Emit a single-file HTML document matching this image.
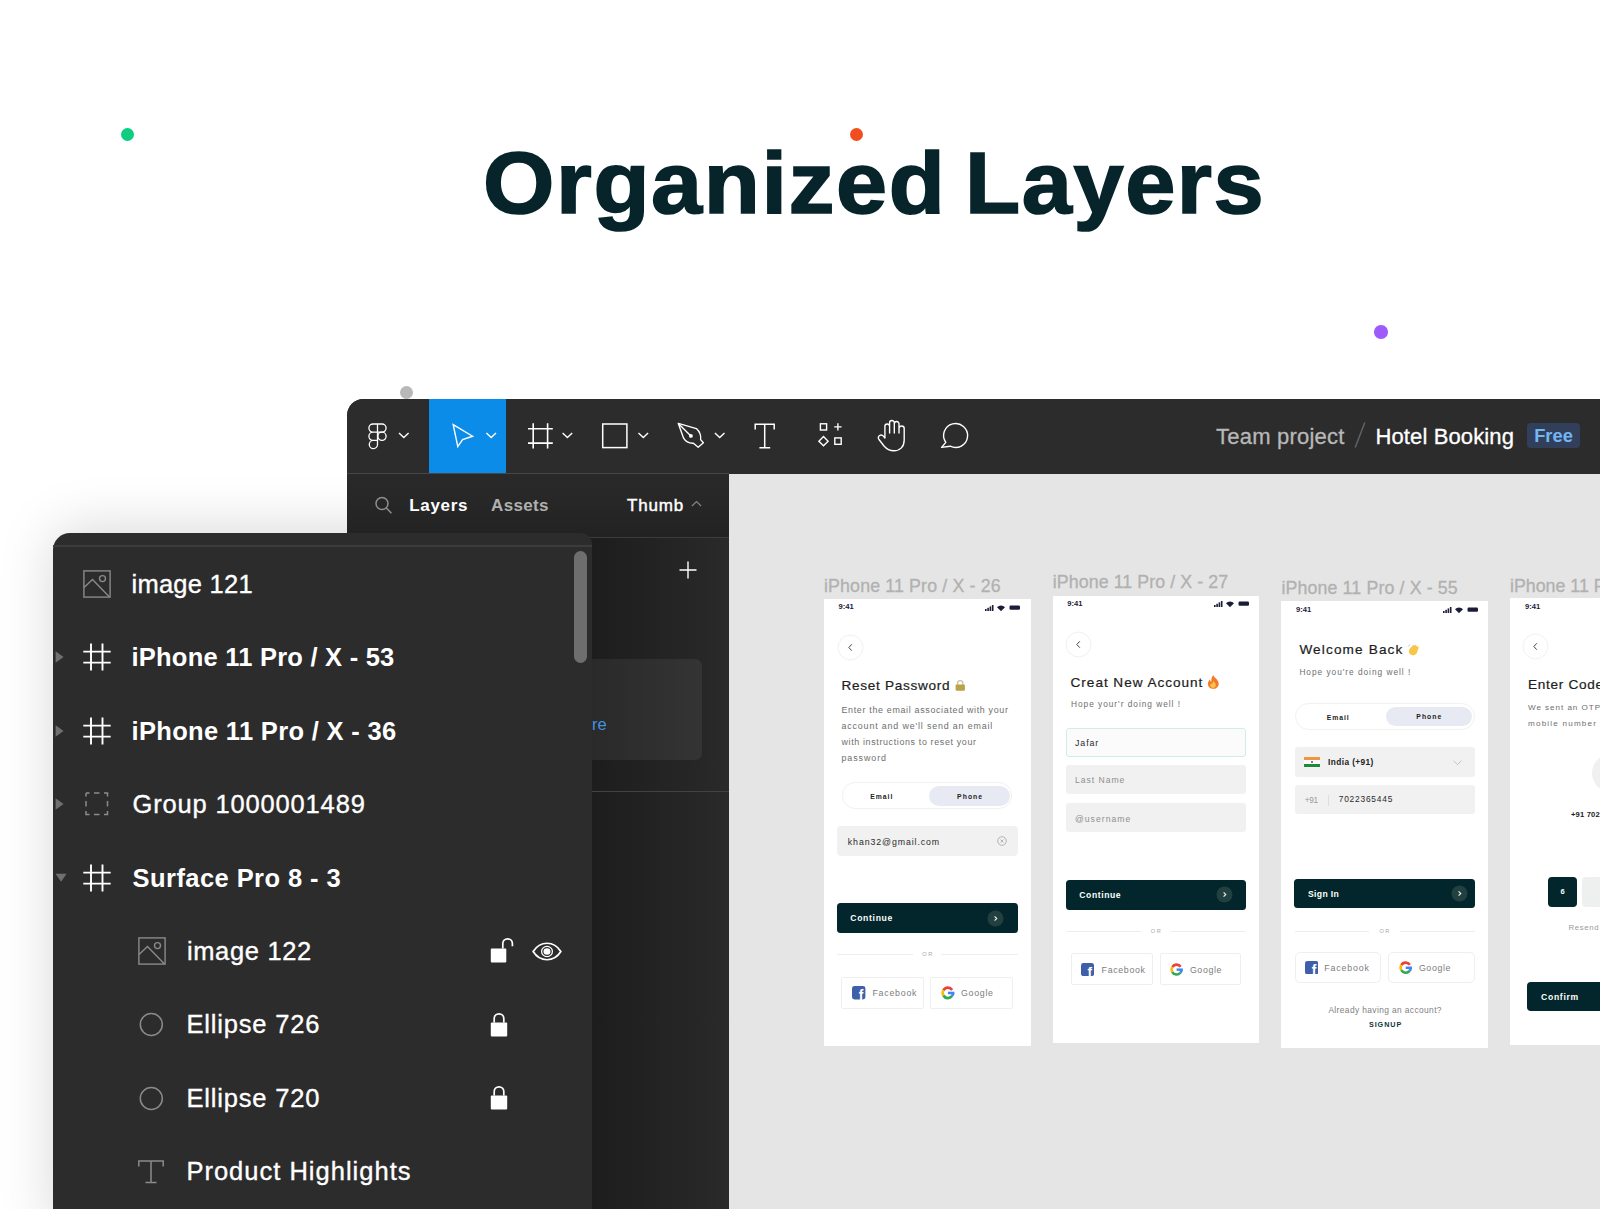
<!DOCTYPE html>
<html lang="en">
<head>
<meta charset="utf-8">
<title>Organized Layers</title>
<style>
*{box-sizing:border-box;margin:0;padding:0}
html,body{width:1600px;height:1209px;overflow:hidden;background:#fff}
body{position:relative;font-family:"Liberation Sans",sans-serif;color:#fff}
.abs{position:absolute}
.dot{position:absolute;border-radius:50%}
h1{position:absolute;left:481px;top:129px;width:790px;height:108px;font-size:87px;line-height:108px;font-weight:700;color:#06242a;white-space:nowrap;-webkit-text-stroke:1.6px #06242a}
/* figma window */
#win{position:absolute;left:347px;top:399px;width:1253px;height:810px;background:#2c2c2c;border-top-left-radius:16.500px;overflow:hidden}
#toolbar{position:absolute;left:0;top:0;width:1253px;height:74px;background:#2c2c2c}
#sel{position:absolute;left:82px;top:0;width:76.500px;height:74.700px;background:#0c8ce9}
#tbline{position:absolute;left:0;top:73.600px;width:382px;height:1.200px;background:#464646}
#side{position:absolute;left:0;top:75px;width:382px;height:735px;background:linear-gradient(90deg,#1d1d1d 0,#1d1d1d 245px,#282828 365px,#2a2a2a 382px)}
#canvas{position:absolute;left:382px;top:74.700px;width:871px;height:736px;background:#e5e5e5}
.tab{position:absolute;font-size:17px;font-weight:700;line-height:20px;white-space:nowrap;letter-spacing:.2px;margin-top:1.200px}
/* floating panel */
#panel{position:absolute;left:53px;top:533px;width:539px;height:676px;background:#2c2c2c;border-top-left-radius:17px;border-top-right-radius:11px;}
.row{position:absolute;left:0;width:539px;height:40px;font-size:25.5px;line-height:40px;white-space:nowrap}
.row span{position:absolute;top:0}
.b{font-weight:700}
.row span:not(.b){-webkit-text-stroke:.35px #fff}
/* phones */
.ph{position:absolute;width:207px;height:448px;background:#fff;color:#222;overflow:hidden}
.lbl{position:absolute;font-size:18px;line-height:20px;color:#b2b2b2;white-space:nowrap}
#phones{position:absolute;left:0;top:0;width:1600px;height:1209px;overflow:hidden}
.t{white-space:nowrap}
</style>
</head>
<body>
<div class="dot" style="left:120.700px;top:127.800px;width:13.600px;height:13.600px;background:#0ccd82"></div>
<div class="dot" style="left:849.700px;top:127.800px;width:13.600px;height:13.600px;background:#f04e1e"></div>
<div class="dot" style="left:1374.100px;top:325.100px;width:13.600px;height:13.600px;background:#9f5afd"></div>
<div class="dot" style="left:400px;top:385.700px;width:13px;height:13px;background:#b8b8b8"></div>
<h1><span class="abs" style="left:2px;top:0;letter-spacing:1.500px;transform-origin:0 0;transform:scaleX(1.056)">Organized</span><span class="abs" style="left:484px;top:0;letter-spacing:1.500px;transform-origin:0 0;transform:scaleX(1.037)">Layers</span></h1>

<div class="abs" style="left:53px;top:533px;width:539px;height:700px;border-top-left-radius:17px;border-top-right-radius:11px;box-shadow:2px -2px 55px rgba(0,0,0,.17)"></div>
<div id="win">
  <div id="toolbar">
    <div id="sel"></div>
    <svg class="abs" style="left:0;top:0" width="1253" height="74" viewBox="347 399 1253 74" fill="none" stroke="#fff" stroke-width="1.4">
      <!-- figma logo -->
      <g stroke-width="1.3">
      <path d="M377.5 424H373a4.1 4.1 0 0 0 0 8.2h4.5zM377.5 424h4.5a4.1 4.1 0 0 1 0 8.2h-4.5zM377.5 432.2H373a4.1 4.1 0 0 0 0 8.2h4.5zM377.5 440.4H373a4.1 4.1 0 1 0 4.5 4.1z"/>
      <circle cx="382" cy="436.3" r="4.1"/>
      </g>
      <path d="M399 433l4.8 4.6 4.8-4.6"/>
      <!-- move -->
      <path d="M453.2 424.6L472.6 436.2 462.6 439.6 457.8 446.6z" stroke-linejoin="miter"/>
      <path d="M486.4 433l4.8 4.6 4.8-4.6"/>
      <!-- frame -->
      <path d="M533.2 423.3v25.2M547.6 423.3v25.2M528 428.8h24.8M528 443.1h24.8" stroke-width="1.6"/>
      <path d="M562.6 433l4.8 4.6 4.8-4.6"/>
      <!-- rect -->
      <rect x="602.7" y="424" width="24.2" height="23.6" stroke-width="1.5"/>
      <path d="M638.5 433l4.8 4.6 4.8-4.6"/>
      <!-- pen -->
      <path d="M678.3 423.4L696.4 428.6C700 432 701.2 435.6 700.6 439.6L703.4 442.8 698.2 447.2 693.4 443.2C689 443.4 685.6 441.6 683.6 438.2z" stroke-linejoin="round"/>
      <path d="M678.3 423.4L690.4 435.4" />
      <circle cx="690.9" cy="435.9" r="1.9" fill="#fff" stroke="none"/>
      <path d="M714.9 433l4.8 4.6 4.8-4.6"/>
      <!-- text -->
      <path d="M755.2 429.4v-5.2h19v5.2M764.7 424.2v23.6M759.4 447.8h10.8" stroke-width="1.5"/>
      <!-- components -->
      <rect x="820.4" y="423.8" width="6.2" height="6.2"/>
      <path d="M837.9 423.2v7.4M834.2 426.9h7.4"/>
      <path d="M823.5 436.6l4.6 4.6-4.6 4.6-4.6-4.6z"/>
      <rect x="834.8" y="437.9" width="6.4" height="6.4"/>
      <!-- hand -->
      <path d="M884.9 438V426.4a2.35 2.35 0 0 1 4.7 0V433M889.6 433V422.8a2.35 2.35 0 0 1 4.7 0V433M894.3 433V423.8a2.35 2.35 0 0 1 4.7 0V433M899 433V428.6a2.6 2.6 0 0 1 5.2 0V440c0 6.6-4 10.8-10.4 10.8-4.6 0-7.2-1.8-9.8-4.8L879.2 439.800c-1.400-1.600-1-3.400.4-4.300 1.500-.9 3-.2 4 .9L884.900 438" stroke-linejoin="round" stroke-linecap="round"/>
      <!-- comment -->
      <path d="M941.6 447.400L945.800 442.400A12 12 0 1 1 950.200 446.200z" stroke-linejoin="round"/>
    </svg>
    <div class="abs" style="left:869px;top:25px;font-size:22px;line-height:26px;color:#b8b8b8;white-space:nowrap;letter-spacing:.22px;-webkit-text-stroke:.3px #b8b8b8">Team project</div>
    <svg class="abs" style="left:1006px;top:22px" width="14" height="28" viewBox="0 0 14 28"><path d="M11.800 1.500L2.200 26.500" stroke="#626262" stroke-width="1.500" fill="none"/></svg>
    <div class="abs" style="left:1028.500px;top:25px;font-size:22px;line-height:26px;color:#fff;white-space:nowrap;letter-spacing:.12px;-webkit-text-stroke:.3px #fff">Hotel Booking</div>
    <div class="abs" style="left:1180px;top:24px;width:53px;height:25px;border-radius:4px;background:#323f5b;color:#74b6f3;font-size:18.300px;line-height:26px;font-weight:700;text-align:center">Free</div>
  </div>
  <div id="side">
    <div class="abs" style="left:0;top:0;width:382px;height:63px;background:linear-gradient(180deg,#292929 0,#272727 45%,#222 100%)"></div>
    <div class="abs" style="left:0;top:63px;width:382px;height:1px;background:#3c3c3c"></div>
    <svg class="abs" style="left:26px;top:21px" width="22" height="22" viewBox="0 0 22 22" fill="none" stroke="#8f8f8f" stroke-width="1.5"><circle cx="9" cy="8.500" r="6"/><path d="M13.400 13l5 5.200"/></svg>
    <div class="tab" style="left:62.300px;top:21px;color:#fff;letter-spacing:.65px">Layers</div>
    <div class="tab" style="left:144px;top:21px;color:#b0b0b0;letter-spacing:.35px">Assets</div>
    <div class="tab" style="left:280px;top:21px;color:#fff;font-weight:400;-webkit-text-stroke:.45px #fff;letter-spacing:.85px">Thumb</div>
    <svg class="abs" style="left:343.500px;top:25.500px" width="11" height="7.500" viewBox="0 0 12 8" fill="none" stroke="#858585" stroke-width="1.3"><path d="M1 6.500l5-4.800 5 4.800"/></svg>
    <svg class="abs" style="left:332px;top:87px" width="18" height="18" viewBox="0 0 18 18" fill="none" stroke="#fff" stroke-width="1.4"><path d="M9 .5v17M.5 9h17"/></svg>
    <div class="abs" style="left:245px;top:185px;width:110px;height:101px;background:linear-gradient(90deg,#2a2a2a,#343434);border-radius:0 7px 7px 0"></div>
    <div class="abs" style="left:245px;top:239px;font-size:16.500px;line-height:22px;color:#4292df">re</div>
    <div class="abs" style="left:245px;top:316.500px;width:137px;height:1.200px;background:#424242"></div>
  </div>
  <div id="tbline"></div>
  <div id="canvas"></div>
</div>

<!--PHONES-->
<div id="phones">
<span class="abs t" style="left:824.0px;top:574.3px;font-size:17.8px;line-height:24.9px;color:#b1b1b1;font-weight:400;letter-spacing:0.14px;-webkit-text-stroke:.3px #b1b1b1;">iPhone 11 Pro / X - 26</span>
<div class="abs" style="left:824.0px;top:598.7px;width:206.8px;height:447.8px;background:#fff;"></div>
<span class="abs t" style="left:838.5px;top:602.4px;font-size:7.6px;line-height:10.6px;color:#1b1b3a;font-weight:700;letter-spacing:0.03px;">9:41</span>
<svg class="abs" style="left:985.3px;top:603.7px" width="36" height="7" viewBox="0 0 36 7" fill="#1b1b3a"><rect x="0" y="5" width="1.6" height="2"/><rect x="2.300" y="3.800" width="1.600" height="3.200"/><rect x="4.600" y="2.400" width="1.600" height="4.600"/><rect x="6.900" y="1" width="1.600" height="6"/><path d="M12 3.200a5.500 5.500 0 0 1 8 0l-4 4z"/><rect x="24.500" y="1.600" width="10.500" height="4.200" rx="1.200"/></svg>
<svg class="abs" style="left:836.8px;top:633.8px" width="27" height="27" viewBox="0 0 27 27" fill="none"><circle cx="13.500" cy="13.500" r="12.400" fill="#fff" stroke="#f1f1f1" stroke-width="1"/><path d="M14.800 10.300l-3 3.200 3 3.200" stroke="#444" stroke-width="1"/></svg>
<span class="abs t" style="left:841.5px;top:675.7px;font-size:13.6px;line-height:19.0px;color:#1e1e1e;font-weight:400;letter-spacing:0.69px;-webkit-text-stroke:.22px #1e1e1e;">Reset Password</span>
<svg class="abs" style="left:954.5px;top:680px" width="10.500" height="11" viewBox="0 0 10.500 11"><path d="M2.600 5V3.300a2.650 2.650 0 0 1 5.300 0V5" fill="none" stroke="#c9c39a" stroke-width="1.300"/><rect x=".6" y="4.600" width="9.300" height="6.200" rx="1" fill="#b9a24a"/></svg>
<span class="abs t" style="left:841.5px;top:703.8px;font-size:8.9px;line-height:12.5px;color:#6e6e6e;font-weight:400;letter-spacing:0.68px;">Enter the email associated with your</span>
<span class="abs t" style="left:841.5px;top:719.7px;font-size:8.9px;line-height:12.5px;color:#6e6e6e;font-weight:400;letter-spacing:0.84px;">account and we&#x27;ll send an email</span>
<span class="abs t" style="left:841.5px;top:735.8px;font-size:8.9px;line-height:12.5px;color:#6e6e6e;font-weight:400;letter-spacing:0.65px;">with instructions to reset your</span>
<span class="abs t" style="left:841.5px;top:751.8px;font-size:8.9px;line-height:12.5px;color:#6e6e6e;font-weight:400;letter-spacing:0.93px;">password</span>
<div class="abs" style="left:841.5px;top:782.0px;width:170.5px;height:26.5px;background:#fff;border-radius:13.25px;border:1px solid #f1f1f1;"></div>
<div class="abs" style="left:929.0px;top:785.5px;width:81.0px;height:20.0px;background:#e8eaf3;border-radius:10.0px;"></div>
<span class="abs t" style="left:870.3px;top:791.5px;font-size:6.8px;line-height:9.5px;color:#222;font-weight:700;letter-spacing:0.96px;">Email</span>
<span class="abs t" style="left:957.1px;top:791.5px;font-size:6.8px;line-height:9.5px;color:#222;font-weight:700;letter-spacing:1.05px;">Phone</span>
<div class="abs" style="left:836.9px;top:826.3px;width:180.9px;height:29.5px;background:#f1f1f1;border-radius:4px;"></div>
<span class="abs t" style="left:847.8px;top:835.5px;font-size:8.8px;line-height:12.3px;color:#2a2a2a;font-weight:400;letter-spacing:0.90px;">khan32@gmail.com</span>
<svg class="abs" style="left:997.2px;top:836.3px" width="10" height="10" viewBox="0 0 10 10" fill="none" stroke="#9a9a9a" stroke-width=".7"><circle cx="5" cy="5" r="4.300"/><path d="M3.600 3.600l2.800 2.800M6.400 3.600l-2.800 2.800"/></svg>
<div class="abs" style="left:836.9px;top:903.0px;width:180.9px;height:30.0px;background:#02262b;border-radius:3.5px;"></div>
<span class="abs t" style="left:850.3px;top:912.3px;font-size:8.6px;line-height:12.0px;color:#fff;font-weight:700;letter-spacing:0.68px;">Continue</span>
<svg class="abs" style="left:987.1px;top:909.5px" width="17" height="17" viewBox="0 0 17 17" fill="none"><circle cx="8.500" cy="8.500" r="8" fill="#21403f"/><path d="M7.600 6.300l2.200 2.200-2.200 2.200" stroke="#e8eeee" stroke-width="1.100"/></svg>
<div class="abs" style="left:836.9px;top:954.1px;width:76.1px;height:1.0px;background:#eeeeee;"></div>
<div class="abs" style="left:941.3px;top:954.1px;width:76.5px;height:1.0px;background:#eeeeee;"></div>
<span class="abs t" style="left:922.2px;top:950.9px;font-size:5.6px;line-height:7.8px;color:#a8a8a8;font-weight:400;letter-spacing:1.61px;">OR</span>
<div class="abs" style="left:841.4px;top:976.7px;width:82.3px;height:32.5px;background:#fff;border-radius:2px;border:1px solid #efefef;"></div>
<svg class="abs" style="left:852.4px;top:986.2px" width="13.4" height="13.4" viewBox="0 0 14 14"><rect width="14" height="14" rx="2.600" fill="#3f5fa8"/><text x="9.400" y="14.200" font-family="Liberation Sans,sans-serif" font-weight="700" font-size="14.500" fill="#fff" text-anchor="middle">f</text></svg>
<span class="abs t" style="left:872.4px;top:987.4px;font-size:8.8px;line-height:12.3px;color:#7c7c7c;font-weight:400;letter-spacing:0.78px;">Facebook</span>
<div class="abs" style="left:930.3px;top:976.7px;width:82.3px;height:32.5px;background:#fff;border-radius:2px;border:1px solid #efefef;"></div>
<svg class="abs" style="left:940.9px;top:986.0px" width="13.8" height="13.8" viewBox="0 0 48 48" fill="none" stroke-width="9.500"><path d="M38.740 13.680A18 18 0 0 0 8.410 15" stroke="#EA4335"/><path d="M8.410 15A18 18 0 0 0 8.410 33" stroke="#FBBC05"/><path d="M8.410 33A18 18 0 0 0 37.790 35.570" stroke="#34A853"/><path d="M37.790 35.570A18 18 0 0 0 42 24" stroke="#4285F4"/><path d="M46.500 24.200H24" stroke="#4285F4" stroke-width="8.800"/></svg>
<span class="abs t" style="left:960.9px;top:987.4px;font-size:8.8px;line-height:12.3px;color:#7c7c7c;font-weight:400;letter-spacing:0.75px;">Google</span>
<span class="abs t" style="left:1052.8px;top:569.7px;font-size:17.8px;line-height:24.9px;color:#b1b1b1;font-weight:400;letter-spacing:0.08px;-webkit-text-stroke:.3px #b1b1b1;">iPhone 11 Pro / X - 27</span>
<div class="abs" style="left:1052.8px;top:595.6px;width:206.3px;height:447.3px;background:#fff;"></div>
<span class="abs t" style="left:1067.3px;top:598.9px;font-size:7.6px;line-height:10.6px;color:#1b1b3a;font-weight:700;letter-spacing:0.03px;">9:41</span>
<svg class="abs" style="left:1213.5px;top:600.2px" width="36" height="7" viewBox="0 0 36 7" fill="#1b1b3a"><rect x="0" y="5" width="1.6" height="2"/><rect x="2.300" y="3.800" width="1.600" height="3.200"/><rect x="4.600" y="2.400" width="1.600" height="4.600"/><rect x="6.900" y="1" width="1.600" height="6"/><path d="M12 3.200a5.500 5.500 0 0 1 8 0l-4 4z"/><rect x="24.500" y="1.600" width="10.500" height="4.200" rx="1.200"/></svg>
<svg class="abs" style="left:1065.4px;top:630.5px" width="27" height="27" viewBox="0 0 27 27" fill="none"><circle cx="13.500" cy="13.500" r="12.400" fill="#fff" stroke="#f1f1f1" stroke-width="1"/><path d="M14.800 10.300l-3 3.200 3 3.200" stroke="#444" stroke-width="1"/></svg>
<span class="abs t" style="left:1070.6px;top:672.6px;font-size:13.6px;line-height:19.0px;color:#1e1e1e;font-weight:400;letter-spacing:0.96px;-webkit-text-stroke:.22px #1e1e1e;">Creat New Account</span>
<svg class="abs" style="left:1207px;top:674.5px" width="13" height="14" viewBox="0 0 13 14"><path d="M6.300 .3c.8 2.200 3.200 3.400 4.600 5.600 1.600 2.600.8 6.300-2.200 7.500-2.600 1-5.800.2-7.200-2.200C.2 8.800 1.300 6 2.900 4.400c.2 1.200.7 1.900 1.500 2.300C4 4.300 4.800 1.700 6.300.3z" fill="#f4792a"/><path d="M6.500 6.300c1.600 1.500 2.700 3.100 2 5-.6 1.500-2.700 2-4 1.100-1.500-1-1.400-3-.3-4.200.2.700.6 1.100 1.200 1.300-.2-1.200.2-2.400 1.100-3.200z" fill="#fbc74a"/></svg>
<span class="abs t" style="left:1071.0px;top:699.0px;font-size:8.3px;line-height:11.6px;color:#6e6e6e;font-weight:400;letter-spacing:0.98px;">Hope your&#x27;r doing well !</span>
<div class="abs" style="left:1065.8px;top:728.3px;width:179.9px;height:29.0px;background:#fbfbfb;border-radius:3px;border:1px solid #cfeee6;"></div>
<span class="abs t" style="left:1075.0px;top:737.0px;font-size:8.8px;line-height:12.3px;color:#2a2a2a;font-weight:400;letter-spacing:0.93px;">Jafar</span>
<div class="abs" style="left:1065.8px;top:765.1px;width:179.9px;height:29.4px;background:#f1f1f1;border-radius:3px;"></div>
<span class="abs t" style="left:1075.0px;top:774.3px;font-size:8.6px;line-height:12.0px;color:#8f8f8f;font-weight:400;letter-spacing:0.97px;">Last Name</span>
<div class="abs" style="left:1065.8px;top:802.5px;width:179.9px;height:29.5px;background:#f1f1f1;border-radius:3px;"></div>
<span class="abs t" style="left:1075.0px;top:812.5px;font-size:8.6px;line-height:12.0px;color:#8f8f8f;font-weight:400;letter-spacing:1.04px;">@username</span>
<div class="abs" style="left:1065.8px;top:880.2px;width:180.2px;height:29.4px;background:#02262b;border-radius:3.5px;"></div>
<span class="abs t" style="left:1079.3px;top:889.2px;font-size:8.6px;line-height:12.0px;color:#fff;font-weight:700;letter-spacing:0.58px;">Continue</span>
<svg class="abs" style="left:1215.9px;top:886.4px" width="17" height="17" viewBox="0 0 17 17" fill="none"><circle cx="8.500" cy="8.500" r="8" fill="#21403f"/><path d="M7.600 6.300l2.200 2.200-2.200 2.200" stroke="#e8eeee" stroke-width="1.100"/></svg>
<div class="abs" style="left:1065.8px;top:930.8px;width:75.5px;height:1.0px;background:#eeeeee;"></div>
<div class="abs" style="left:1170.2px;top:930.8px;width:75.8px;height:1.0px;background:#eeeeee;"></div>
<span class="abs t" style="left:1150.8px;top:927.6px;font-size:5.6px;line-height:7.8px;color:#a8a8a8;font-weight:400;letter-spacing:1.61px;">OR</span>
<div class="abs" style="left:1070.6px;top:953.4px;width:82.1px;height:32.0px;background:#fff;border-radius:2px;border:1px solid #efefef;"></div>
<svg class="abs" style="left:1081.3px;top:962.8px" width="13.1" height="13.1" viewBox="0 0 14 14"><rect width="14" height="14" rx="2.600" fill="#3f5fa8"/><text x="9.400" y="14.200" font-family="Liberation Sans,sans-serif" font-weight="700" font-size="14.500" fill="#fff" text-anchor="middle">f</text></svg>
<span class="abs t" style="left:1101.6px;top:963.9px;font-size:8.8px;line-height:12.3px;color:#7c7c7c;font-weight:400;letter-spacing:0.68px;">Facebook</span>
<div class="abs" style="left:1159.5px;top:953.4px;width:81.5px;height:32.0px;background:#fff;border-radius:2px;border:1px solid #efefef;"></div>
<svg class="abs" style="left:1169.8px;top:962.8px" width="13.2" height="13.2" viewBox="0 0 48 48" fill="none" stroke-width="9.500"><path d="M38.740 13.680A18 18 0 0 0 8.410 15" stroke="#EA4335"/><path d="M8.410 15A18 18 0 0 0 8.410 33" stroke="#FBBC05"/><path d="M8.410 33A18 18 0 0 0 37.790 35.570" stroke="#34A853"/><path d="M37.790 35.570A18 18 0 0 0 42 24" stroke="#4285F4"/><path d="M46.500 24.200H24" stroke="#4285F4" stroke-width="8.800"/></svg>
<span class="abs t" style="left:1189.9px;top:963.9px;font-size:8.8px;line-height:12.3px;color:#7c7c7c;font-weight:400;letter-spacing:0.64px;">Google</span>
<span class="abs t" style="left:1281.4px;top:576.4px;font-size:17.8px;line-height:24.9px;color:#b1b1b1;font-weight:400;letter-spacing:0.13px;-webkit-text-stroke:.3px #b1b1b1;">iPhone 11 Pro / X - 55</span>
<div class="abs" style="left:1281.4px;top:601.2px;width:206.3px;height:446.8px;background:#fff;"></div>
<span class="abs t" style="left:1296.0px;top:605.0px;font-size:7.6px;line-height:10.6px;color:#1b1b3a;font-weight:700;letter-spacing:0.03px;">9:41</span>
<svg class="abs" style="left:1442.7px;top:606.3px" width="36" height="7" viewBox="0 0 36 7" fill="#1b1b3a"><rect x="0" y="5" width="1.6" height="2"/><rect x="2.300" y="3.800" width="1.600" height="3.200"/><rect x="4.600" y="2.400" width="1.600" height="4.600"/><rect x="6.900" y="1" width="1.600" height="6"/><path d="M12 3.200a5.500 5.500 0 0 1 8 0l-4 4z"/><rect x="24.500" y="1.600" width="10.500" height="4.200" rx="1.200"/></svg>
<span class="abs t" style="left:1299.4px;top:639.7px;font-size:13.6px;line-height:19.0px;color:#1e1e1e;font-weight:400;letter-spacing:1.14px;-webkit-text-stroke:.22px #1e1e1e;">Welcome Back</span>
<svg class="abs" style="left:1407px;top:644px" width="13" height="12" viewBox="0 0 13 12"><path d="M3.200 4.200L6 1.200c.6-.6 1.500.2 1 .9l.9-.8c.7-.6 1.600.3 1 1l.5-.4c.7-.5 1.500.4 1 1.100l.3-.2c.7-.4 1.400.5.900 1.200L9.800 8.900c-1.600 2.400-4.600 3-6.600 1.400C1.400 8.900 1.300 6.200 3.200 4.200z" fill="#f7c548"/><path d="M1.200 2.600C1.500 1.700 2.200 1 3.100.7M.4 3.400" stroke="#9ec7e6" stroke-width=".8" fill="none"/></svg>
<span class="abs t" style="left:1299.4px;top:666.5px;font-size:8.3px;line-height:11.6px;color:#6e6e6e;font-weight:400;letter-spacing:0.98px;">Hope you&#x27;re doing well !</span>
<div class="abs" style="left:1294.5px;top:703.0px;width:180.2px;height:27.0px;background:#fff;border-radius:13.5px;border:1px solid #f1f1f1;"></div>
<div class="abs" style="left:1386.2px;top:706.6px;width:85.4px;height:19.6px;background:#e8eaf3;border-radius:9.800000000000011px;"></div>
<span class="abs t" style="left:1326.7px;top:712.9px;font-size:6.8px;line-height:9.5px;color:#222;font-weight:700;letter-spacing:0.96px;">Email</span>
<span class="abs t" style="left:1416.3px;top:712.1px;font-size:6.8px;line-height:9.5px;color:#222;font-weight:700;letter-spacing:1.05px;">Phone</span>
<div class="abs" style="left:1294.5px;top:747.3px;width:180.2px;height:29.6px;background:#f1f1f1;border-radius:3px;"></div>
<div class="abs" style="left:1303.6px;top:757.3px;width:16.100px;height:10px;background:linear-gradient(180deg,#f4953a 0,#f4953a 33%,#fff 33%,#fff 66%,#23883a 66%,#23883a 100%)"></div><div class="abs" style="left:1310.600px;top:761.100px;width:2.200px;height:2.200px;border-radius:50%;background:#3a4aa0"></div>
<span class="abs t" style="left:1328.0px;top:757.3px;font-size:8.3px;line-height:11.6px;color:#222;font-weight:700;letter-spacing:0.41px;">India (+91)</span>
<svg class="abs" style="left:1453.4px;top:759.600px" width="9" height="6" viewBox="0 0 9 6" fill="none" stroke="#b5b5b5" stroke-width=".8"><path d="M.6 .8l3.900 3.800L8.400 .8"/></svg>
<div class="abs" style="left:1294.5px;top:785.2px;width:180.2px;height:29.3px;background:#f1f1f1;border-radius:3px;"></div>
<span class="abs t" style="left:1304.8px;top:794.5px;font-size:8.2px;line-height:11.5px;color:#999;font-weight:400;letter-spacing:-0.35px;">+91</span>
<div class="abs" style="left:1328.0px;top:795.0px;width:1.0px;height:10.5px;background:#dedede;"></div>
<span class="abs t" style="left:1338.7px;top:794.4px;font-size:8.4px;line-height:11.8px;color:#2a2a2a;font-weight:400;letter-spacing:0.79px;">7022365445</span>
<div class="abs" style="left:1294.3px;top:878.6px;width:180.8px;height:29.9px;background:#02262b;border-radius:3.5px;"></div>
<span class="abs t" style="left:1307.9px;top:887.9px;font-size:8.6px;line-height:12.0px;color:#fff;font-weight:700;letter-spacing:0.39px;">Sign In</span>
<svg class="abs" style="left:1451.3px;top:885.0px" width="17" height="17" viewBox="0 0 17 17" fill="none"><circle cx="8.500" cy="8.500" r="8" fill="#21403f"/><path d="M7.600 6.300l2.200 2.200-2.200 2.200" stroke="#e8eeee" stroke-width="1.100"/></svg>
<div class="abs" style="left:1294.5px;top:930.8px;width:74.8px;height:1.0px;background:#eeeeee;"></div>
<div class="abs" style="left:1400.3px;top:930.8px;width:74.7px;height:1.0px;background:#eeeeee;"></div>
<span class="abs t" style="left:1379.4px;top:927.6px;font-size:5.6px;line-height:7.8px;color:#a8a8a8;font-weight:400;letter-spacing:1.61px;">OR</span>
<div class="abs" style="left:1294.5px;top:952.0px;width:86.2px;height:31.0px;background:#fff;border-radius:5px;border:1px solid #efefef;"></div>
<svg class="abs" style="left:1304.6px;top:960.8px" width="13.4" height="13.4" viewBox="0 0 14 14"><rect width="14" height="14" rx="2.600" fill="#3f5fa8"/><text x="9.400" y="14.200" font-family="Liberation Sans,sans-serif" font-weight="700" font-size="14.500" fill="#fff" text-anchor="middle">f</text></svg>
<span class="abs t" style="left:1324.2px;top:962.0px;font-size:8.8px;line-height:12.3px;color:#7c7c7c;font-weight:400;letter-spacing:0.87px;">Facebook</span>
<div class="abs" style="left:1388.3px;top:952.0px;width:86.6px;height:31.0px;background:#fff;border-radius:5px;border:1px solid #efefef;"></div>
<svg class="abs" style="left:1398.6px;top:960.8px" width="13.4" height="13.4" viewBox="0 0 48 48" fill="none" stroke-width="9.500"><path d="M38.740 13.680A18 18 0 0 0 8.410 15" stroke="#EA4335"/><path d="M8.410 15A18 18 0 0 0 8.410 33" stroke="#FBBC05"/><path d="M8.410 33A18 18 0 0 0 37.790 35.570" stroke="#34A853"/><path d="M37.790 35.570A18 18 0 0 0 42 24" stroke="#4285F4"/><path d="M46.500 24.200H24" stroke="#4285F4" stroke-width="8.800"/></svg>
<span class="abs t" style="left:1418.9px;top:962.0px;font-size:8.8px;line-height:12.3px;color:#7c7c7c;font-weight:400;letter-spacing:0.64px;">Google</span>
<span class="abs t" style="left:1328.4px;top:1004.8px;font-size:8.4px;line-height:11.8px;color:#808080;font-weight:400;letter-spacing:0.39px;">Already having an account?</span>
<span class="abs t" style="left:1368.9px;top:1019.5px;font-size:7.2px;line-height:10.1px;color:#12363a;font-weight:700;letter-spacing:0.97px;">SIGNUP</span>
<span class="abs t" style="left:1510.0px;top:573.5px;font-size:17.8px;line-height:24.9px;color:#b1b1b1;font-weight:400;letter-spacing:0.00px;-webkit-text-stroke:.3px #b1b1b1;">iPhone 11 Pro</span>
<div class="abs" style="left:1510.0px;top:598.1px;width:90.0px;height:447.1px;background:#fff;"></div>
<span class="abs t" style="left:1525.0px;top:602.0px;font-size:7.6px;line-height:10.6px;color:#1b1b3a;font-weight:700;letter-spacing:0.03px;">9:41</span>
<svg class="abs" style="left:1522.4px;top:632.8px" width="27" height="27" viewBox="0 0 27 27" fill="none"><circle cx="13.500" cy="13.500" r="12.400" fill="#fff" stroke="#f1f1f1" stroke-width="1"/><path d="M14.800 10.300l-3 3.200 3 3.200" stroke="#444" stroke-width="1"/></svg>
<span class="abs t" style="left:1528.0px;top:675.4px;font-size:13.6px;line-height:19.0px;color:#1e1e1e;font-weight:400;letter-spacing:0.69px;-webkit-text-stroke:.22px #1e1e1e;">Enter Code</span>
<span class="abs t" style="left:1528.0px;top:702.0px;font-size:8.1px;line-height:11.3px;color:#6e6e6e;font-weight:400;letter-spacing:0.95px;">We sent an OTP</span>
<span class="abs t" style="left:1528.0px;top:717.9px;font-size:8.1px;line-height:11.3px;color:#6e6e6e;font-weight:400;letter-spacing:1.20px;">mobile number</span>
<div class="abs" style="left:1591.7px;top:754.0px;width:38.3px;height:38.0px;background:#f0f0f0;border-radius:19px;"></div>
<span class="abs t" style="left:1571.0px;top:809.5px;font-size:7.6px;line-height:10.6px;color:#222;font-weight:700;letter-spacing:0.16px;">+91 7022</span>
<div class="abs" style="left:1547.9px;top:876.6px;width:29.3px;height:30.0px;background:#02262b;border-radius:4px;"></div>
<span class="abs t" style="left:1560.5px;top:886.6px;font-size:7.5px;line-height:10.5px;color:#fff;font-weight:700;letter-spacing:0.83px;">6</span>
<div class="abs" style="left:1581.8px;top:876.6px;width:30.2px;height:30.0px;background:#eef0ef;border-radius:4px;"></div>
<span class="abs t" style="left:1568.6px;top:922.7px;font-size:7.8px;line-height:10.9px;color:#9a9a9a;font-weight:400;letter-spacing:0.62px;">Resend</span>
<div class="abs" style="left:1527.2px;top:981.7px;width:112.8px;height:29.8px;background:#02262b;border-radius:4px;"></div>
<span class="abs t" style="left:1541.0px;top:990.9px;font-size:8.6px;line-height:12.0px;color:#fff;font-weight:700;letter-spacing:0.72px;">Confirm</span>
</div>
<!--/PHONES-->
<div id="panel">
  <div class="abs" style="left:0;top:12.300px;width:539px;height:1.500px;background:#3c3c3c"></div>
  <div class="abs" style="left:521px;top:18px;width:13px;height:112px;border-radius:7px;background:#6e6e6e"></div>
  <div class="row" style="top:31.0px"><svg class="abs" style="left:30px;top:6px" width="28" height="28" viewBox="0 0 28 28" fill="none" stroke="#8a8a8a" stroke-width="1.4"><rect x=".9" y=".9" width="26.2" height="26.2"/><circle cx="19.500" cy="8.600" r="3"/><path d="M1 17.500l8.500-8 17 17.500"/></svg><span class="" style="left:78.5px;letter-spacing:0.25px">image 121</span></div>
  <div class="row" style="top:104.4px"><svg class="abs" style="left:2px;top:13px" width="10" height="14" viewBox="0 0 10 14"><path d="M.6 1.200L8.600 7 .6 12.800z" fill="#6f6f6f"/></svg><svg class="abs" style="left:30px;top:6px" width="28" height="28" viewBox="0 0 28 28" fill="none" stroke="#fff" stroke-width="1.9"><path d="M8 .5v27M19.500 .5v27M.3 8.600h27.400M.3 19.600h27.400"/></svg><span class="b" style="left:78.5px;letter-spacing:0.23px">iPhone 11 Pro / X - 53</span></div>
  <div class="row" style="top:177.8px"><svg class="abs" style="left:2px;top:13px" width="10" height="14" viewBox="0 0 10 14"><path d="M.6 1.200L8.600 7 .6 12.800z" fill="#6f6f6f"/></svg><svg class="abs" style="left:30px;top:6px" width="28" height="28" viewBox="0 0 28 28" fill="none" stroke="#fff" stroke-width="1.9"><path d="M8 .5v27M19.500 .5v27M.3 8.600h27.400M.3 19.600h27.400"/></svg><span class="b" style="left:78.5px;letter-spacing:0.32px">iPhone 11 Pro / X - 36</span></div>
  <div class="row" style="top:251.2px"><svg class="abs" style="left:2px;top:13px" width="10" height="14" viewBox="0 0 10 14"><path d="M.6 1.200L8.600 7 .6 12.800z" fill="#6f6f6f"/></svg><svg class="abs" style="left:30px;top:8px" width="28" height="28" viewBox="0 0 28 28" fill="none" stroke="#8a8a8a" stroke-width="1.5"><path d="M3 1h3.500M11 1h5.500M21 1h3.500v3.500M24.500 9v5.500M24.500 19v3.500H21M16.500 22.500H11M6.500 22.500H3V19M3 14.500V9M3 4.500V1"/></svg><span class="" style="left:79.6px;letter-spacing:0.83px">Group 1000001489</span></div>
  <div class="row" style="top:324.6px"><svg class="abs" style="left:2px;top:15px" width="13" height="10" viewBox="0 0 13 10"><path d="M.6 .8h11L6.100 8.800z" fill="#6f6f6f"/></svg><svg class="abs" style="left:30px;top:6px" width="28" height="28" viewBox="0 0 28 28" fill="none" stroke="#fff" stroke-width="1.9"><path d="M8 .5v27M19.500 .5v27M.3 8.600h27.400M.3 19.600h27.400"/></svg><span class="b" style="left:79.6px;letter-spacing:0.43px">Surface Pro 8 - 3</span></div>
  <div class="row" style="top:398.0px"><svg class="abs" style="left:85px;top:6px" width="28" height="28" viewBox="0 0 28 28" fill="none" stroke="#8a8a8a" stroke-width="1.4"><rect x=".9" y=".9" width="26.2" height="26.2"/><circle cx="19.500" cy="8.600" r="3"/><path d="M1 17.500l8.500-8 17 17.500"/></svg><span class="" style="left:133.9px;letter-spacing:0.66px">image 122</span><svg class="abs" style="left:437px;top:5.500px" width="26" height="27" viewBox="0 0 26 27"><rect x=".8" y="11.500" width="15.500" height="14" rx="1" fill="#fff"/><path d="M12.800 11.500V6.600a4.800 4.800 0 0 1 9.600 0v2.600" fill="none" stroke="#fff" stroke-width="1.700"/></svg><svg class="abs" style="left:478.500px;top:10.500px" width="30" height="19" preserveAspectRatio="none" viewBox="0 0 31 21" fill="none" stroke="#fff" stroke-width="1.800"><path d="M1.200 10.500C5 4 10 1.400 15.500 1.400S26 4 29.800 10.500C26 17 21 19.600 15.500 19.600S5 17 1.200 10.500z"/><circle cx="15.500" cy="10.500" r="3.600" fill="#fff" stroke="none"/><circle cx="15.500" cy="10.500" r="5.600" stroke-width="1.300"/></svg></div>
  <div class="row" style="top:471.4px"><svg class="abs" style="left:85px;top:7px" width="27" height="27" viewBox="0 0 27 27" fill="none" stroke="#8a8a8a" stroke-width="1.500"><circle cx="13.300" cy="13.500" r="11"/></svg><span class="" style="left:133.4px;letter-spacing:0.84px">Ellipse 726</span><svg class="abs" style="left:437px;top:7.500px" width="20" height="27" viewBox="0 0 20 27"><rect x=".8" y="10.500" width="16.400" height="14" rx="1" fill="#fff"/><path d="M4.200 10.500V6.600a4.800 4.800 0 0 1 9.600 0v3.900" fill="none" stroke="#fff" stroke-width="1.700"/></svg></div>
  <div class="row" style="top:544.8px"><svg class="abs" style="left:85px;top:7px" width="27" height="27" viewBox="0 0 27 27" fill="none" stroke="#8a8a8a" stroke-width="1.500"><circle cx="13.300" cy="13.500" r="11"/></svg><span class="" style="left:133.4px;letter-spacing:0.84px">Ellipse 720</span><svg class="abs" style="left:437px;top:7.500px" width="20" height="27" viewBox="0 0 20 27"><rect x=".8" y="10.500" width="16.400" height="14" rx="1" fill="#fff"/><path d="M4.200 10.500V6.600a4.800 4.800 0 0 1 9.600 0v3.900" fill="none" stroke="#fff" stroke-width="1.700"/></svg></div>
  <div class="row" style="top:618.2px"><svg class="abs" style="left:85px;top:8.500px" width="27" height="27" viewBox="0 0 27 27" fill="none" stroke="#8a8a8a" stroke-width="1.500"><path d="M.8 6.500V1h24.400v5.500M13 1v21.500M7.500 22.500h11"/></svg><span class="" style="left:133.4px;letter-spacing:1.01px">Product Highlights</span></div>
</div>
</body>
</html>
